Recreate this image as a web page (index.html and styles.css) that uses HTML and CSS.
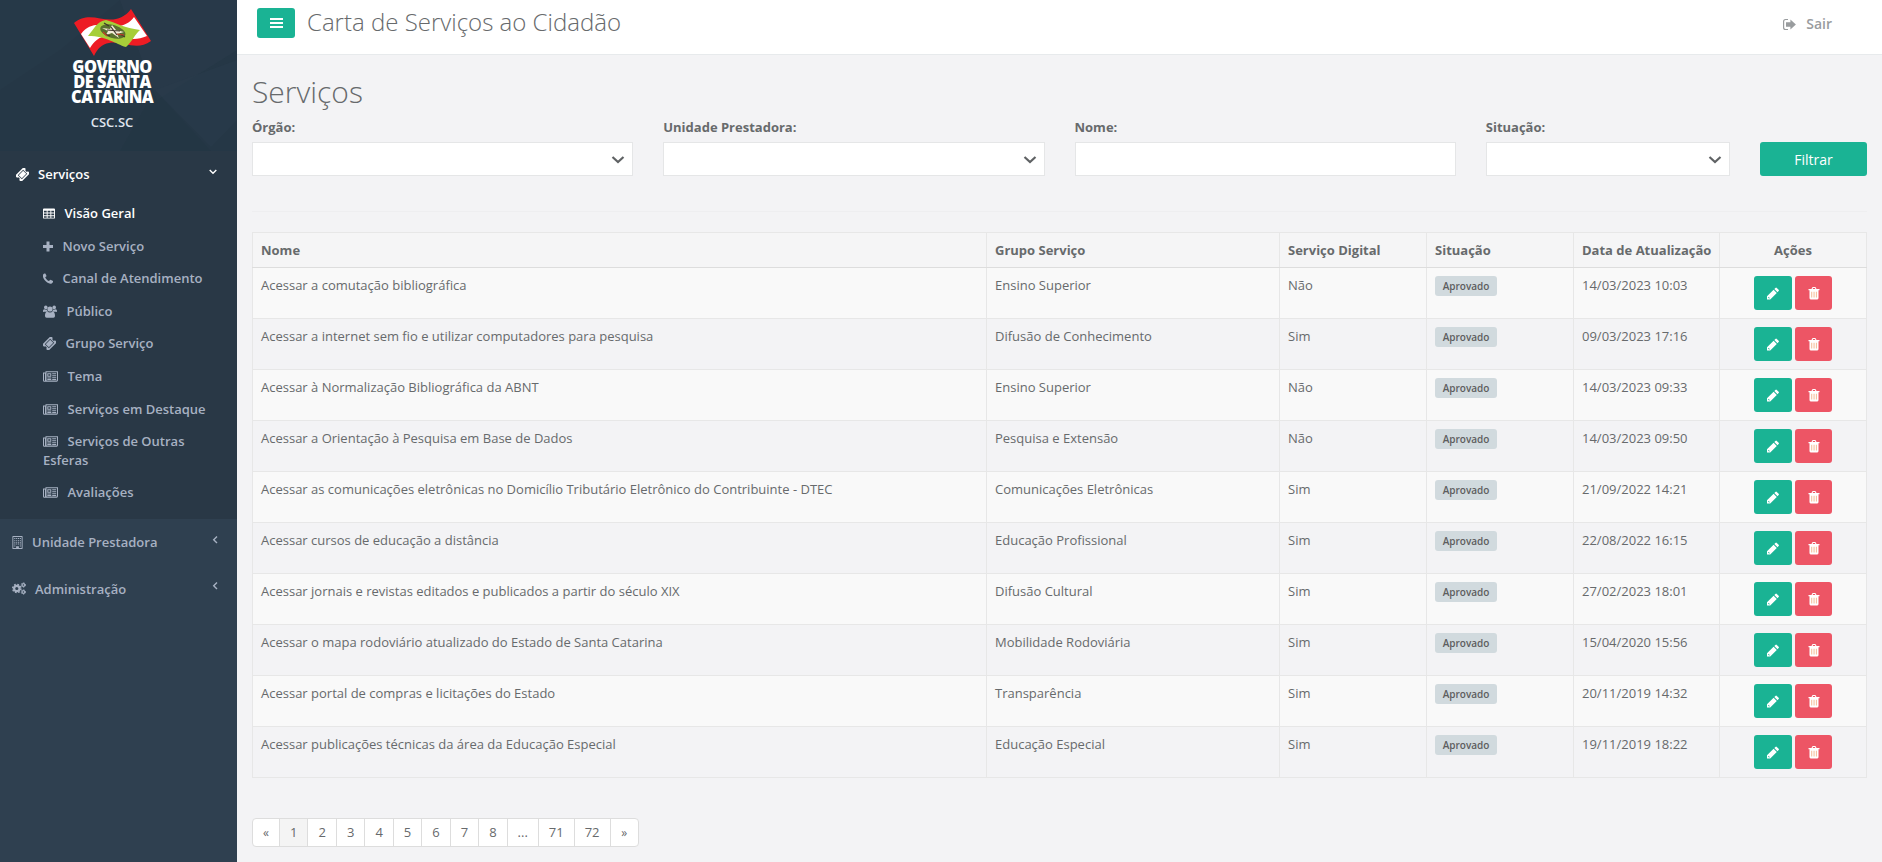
FILE: index.html
```html
<!DOCTYPE html>
<html lang="pt-BR">
<head>
<meta charset="utf-8">
<title>Carta de Serviços ao Cidadão</title>
<link rel="stylesheet" href="styles.css">
</head>
<body>
<svg class="defs" width="0" height="0">
  <symbol id="ticket" viewBox="0 0 14 14"><g transform="rotate(-45 7 7)"><path fill-rule="evenodd" d="M.3 2.300h13.400v3.100a1.600 1.600 0 0 0 0 3.200v3.100H.3V8.600a1.600 1.600 0 0 0 0-3.200zM2.900 3.900v6.200h8.200V3.900zM3.600 4.600h6.800v4.800H3.600z"/></g></symbol>
  <symbol id="table" viewBox="0 0 13 12"><path fill-rule="evenodd" d="M1 .5h11q1 0 1 1v9q0 1-1 1H1q-1 0-1-1v-9q0-1 1-1zM1 3v2h3V3zm4 0v2h3V3zm4 0v2h3V3zM1 6v2h3V6zm4 0v2h3V6zm4 0v2h3V6zM1 9v1.600h3V9zm4 0v1.600h3V9zm4 0v1.600h3V9z"/></symbol>
  <symbol id="plus" viewBox="0 0 10 12"><path d="M3.500 1h3v3.500H10v3H6.500V11h-3V7.500H0v-3h3.500z"/></symbol>
  <symbol id="phone" viewBox="0 0 10 11"><path d="M0 2C.2.800 1.400.5 2.300.500c.5.7 1 1.700 1.200 2.400-.1.600-1.300 1-1.200 1.500.6 1.500 2 2.900 3.500 3.500.6.100.9-1.100 1.500-1.200.8.200 1.800.7 2.700 1.200.3 1-.3 2-1.300 2.500-1.300.600-3 .2-4.500-.900C2.200 8 .6 6 0 4z"/></symbol>
  <symbol id="users" viewBox="0 0 14 13"><circle cx="2.800" cy="2.400" r="1.800"/><circle cx="11.200" cy="2.400" r="1.800"/><circle cx="7" cy="4" r="2.600"/><path d="M0 6.500C0 5 .5 4.200 1.300 4.200q1.500.800 2.600.3Q4 6 5 6.800H1.300Q0 7.200 0 6.500zM14 6.500c0-1.500-.5-2.300-1.300-2.300q-1.500.8-2.600.3Q10 6 9 6.800h3.700q1.300.400 1.300-.3zM2 11c0-2.700.8-4.200 2.300-4.200q2.700 1.600 5.400 0C11.200 6.800 12 8.300 12 11q0 1.700-1.600 1.700H3.600Q2 12.700 2 11z"/></symbol>
  <symbol id="news" viewBox="0 0 15 11"><path fill-rule="evenodd" d="M2.500.3H15v9q0 1.400-1.400 1.400H1.300Q0 10.700 0 9.400V1.600h2.500zM1 2.600v6.800q.1.400.5.400t.5-.4V2.600zM3.500 1.300v8.300h10q.5 0 .5-.5V1.300z"/><path fill-rule="evenodd" d="M4.300 2.200h4v3.600h-4zM5.300 3.200v1.600h2V3.200zM9.200 2.200h4v1h-4zM9.200 4.200h4v1h-4zM9.200 6.200h4v1h-4zM4.300 6.500h4v.9h-4zM4.300 8.100h4V9h-4zM9.200 8.100h4V9h-4z"/></symbol>
  <symbol id="building" viewBox="0 0 11 14"><path fill-rule="evenodd" d="M.5 0h10q.5 0 .5.500v13q0 .5-.5.500H.5q-.5 0-.5-.5V.5Q0 0 .5 0zM1 1v12h3v-2h3v2h3V1z"/><path d="M2 2.200h1.200v1H2zm2 0h1.200v1H4zm2 0h1.200v1H6zm2 0h1.200v1H8zm-6 2h1.200v1H2zm2 0h1.200v1H4zm2 0h1.200v1H6zm2 0h1.200v1H8zm-6 2h1.200v1H2zm2 0h1.200v1H4zm2 0h1.200v1H6zm2 0h1.200v1H8zm-6 2h1.200v1H2zm2 0h1.200v1H4zm2 0h1.200v1H6zm2 0h1.200v1H8zm-6 2h1.200v1H2zm6 0h1.200v1H8z"/></symbol>
  <symbol id="cogs" viewBox="0 0 14 13"><circle cx="4.800" cy="6.500" r="2.700" fill="none" stroke="currentColor" stroke-width="2.200"/><circle cx="4.800" cy="6.500" r="4.100" fill="none" stroke="currentColor" stroke-width="1.500" stroke-dasharray="1.700 1.520"/><circle cx="11.400" cy="3" r="1.400" fill="none" stroke="currentColor" stroke-width="1.200"/><circle cx="11.400" cy="3" r="2.200" fill="none" stroke="currentColor" stroke-width=".9" stroke-dasharray="1.200 1.100"/><circle cx="11.400" cy="10" r="1.400" fill="none" stroke="currentColor" stroke-width="1.200"/><circle cx="11.400" cy="10" r="2.200" fill="none" stroke="currentColor" stroke-width=".9" stroke-dasharray="1.200 1.100"/></symbol>
  <symbol id="pencil" viewBox="0 0 12 12"><path fill-rule="evenodd" d="M0 12V8.800L6.600 2.200 9.800 5.400 3.200 12zM1.200 9.800v.6h.6v.6h.6l.4-.4L1.600 9.400zM7.300 1.500 8.400.4q.7-.7 1.400 0l1.800 1.800q.7.700 0 1.400l-1.100 1.100z"/></symbol>
  <symbol id="trash" viewBox="0 0 12 13"><path fill-rule="evenodd" d="M3.500 2 4.200.5Q4.400 0 5 0h2q.6 0 .8.500L8.500 2h3v1.200h-1v7.900q0 1.400-1.200 1.400H2.700q-1.200 0-1.200-1.400V3.200h-1V2zM4.700 2h2.600l-.4-.9H5.100z"/><path class="bars" d="M3.300 4.700h.9v5.800h-.9zM5.600 4.700h.9v5.800h-.9zM7.900 4.700h.9v5.800h-.9z"/></symbol>
  <symbol id="exit" viewBox="0 0 13 12"><path d="M5 1H2.500Q.6 1 .6 3v6q0 2 1.900 2H5" fill="none" stroke="currentColor" stroke-width="1.200"/><path d="M3 3.800h4.400V1L12.900 6 7.400 11V8.200H3z"/></symbol>
</svg>
<div class="app">
  <nav class="sidebar">
    <div class="profile">
      <svg class="texture" viewBox="0 0 237 151" preserveAspectRatio="none"><path d="M0 0h120L60 50 0 90z" fill="#2b3f4f" opacity=".2"/><path d="M120 0h117v50l-80 50z" fill="#2d4050" opacity=".35"/><path d="M155 90 211 147 237 120V60z" fill="#2a3b4b" opacity=".5"/><path d="M155 90 120 151h91z" fill="#203241" opacity=".25"/></svg>
      <svg class="flag" viewBox="0 0 78 48"><path d="M0 15C14 3 28 14 42 11 50 9 54 5 57 1L77 33C62 44 48 32 35 35c-7 1-12 6-15 13z" fill="#ed1c24"/><path d="M7 26C18 11 32 20 46 18c8-2 11-5 14-9l13 19C60 34 50 29 37 28 26 27 20 33 16 40z" fill="#fff"/><path d="M14 28C20 21 23 13 32 12c11 3 18 8 34 10-5 4-8 12-14 17-11-3-19-11-38-11z" fill="#a6ce39"/><ellipse cx="39" cy="23.500" rx="13" ry="6.500" fill="#59702f" transform="rotate(17 39 23)"/><path d="m28 20 8 1 2-4 4 5 8 2-7 2 2 4-7-5-6 2 2-4z" fill="#f3ecd8"/><path d="m30 15 5 3m-4 8 5 2m10-2 5 3m-14-10 6 8m-10-5 13 1" stroke="#40352b" stroke-width="1.200"/><path d="m29 24 4 4m10-2 7 1" stroke="#c73c29" stroke-width="1.200"/></svg>
      <div class="brand">GOVERNO<br>DE SANTA<br>CATARINA</div>
      <strong class="unit">CSC.SC</strong>
    </div>
    <div class="group open">
      <a class="item"><svg class="ic w13"><use href="#ticket"/></svg><span>Serviços</span><svg class="arrow" viewBox="0 0 8 12"><path d="m.7 4 3.300 3.300L7.300 4"/></svg></a>
      <ul>
        <li class="on"><svg class="ic w12"><use href="#table"/></svg><span>Visão Geral</span></li>
        <li><svg class="ic w10"><use href="#plus"/></svg><span>Novo Serviço</span></li>
        <li><svg class="ic w10"><use href="#phone"/></svg><span>Canal de Atendimento</span></li>
        <li><svg class="ic w14"><use href="#users"/></svg><span>Público</span></li>
        <li><svg class="ic w13"><use href="#ticket"/></svg><span>Grupo Serviço</span></li>
        <li><svg class="ic w15"><use href="#news"/></svg><span>Tema</span></li>
        <li><svg class="ic w15"><use href="#news"/></svg><span>Serviços em Destaque</span></li>
        <li><svg class="ic w15"><use href="#news"/></svg><span>Serviços de Outras Esferas</span></li>
        <li><svg class="ic w15"><use href="#news"/></svg><span>Avaliações</span></li>
      </ul>
    </div>
    <a class="item"><svg class="ic w11"><use href="#building"/></svg><span>Unidade Prestadora</span><svg class="arrow left" viewBox="0 0 8 12"><path d="M6 2.500 2.700 5.800 6 9.100"/></svg></a>
    <a class="item"><svg class="ic w14"><use href="#cogs"/></svg><span>Administração</span><svg class="arrow left" viewBox="0 0 8 12"><path d="M6 2.500 2.700 5.800 6 9.100"/></svg></a>
  </nav>
  <main>
    <header class="topbar">
      <button class="burger"><i></i><i></i><i></i></button>
      <span class="title">Carta de Serviços ao Cidadão</span>
      <a class="logout"><svg class="ic"><use href="#exit"/></svg><span>Sair</span></a>
    </header>
    <section class="content">
      <h1>Serviços</h1>
      <form class="filters">
        <label class="c3">Órgão:<span class="field"><svg viewBox="0 0 14 8"><path d="m1.500 1 5.500 5 5.500-5"/></svg></span></label>
        <label class="c3">Unidade Prestadora:<span class="field"><svg viewBox="0 0 14 8"><path d="m1.500 1 5.500 5 5.500-5"/></svg></span></label>
        <label class="c3">Nome:<span class="field"></span></label>
        <label class="c2">Situação:<span class="field"><svg viewBox="0 0 14 8"><path d="m1.500 1 5.500 5 5.500-5"/></svg></span></label>
        <button class="filter" type="button">Filtrar</button>
      </form>
      <hr>
      <table>
        <colgroup><col class="k-name"><col class="k-group"><col class="k-s"><col class="k-s"><col class="k-date"><col class="k-s"></colgroup>
        <thead><tr><th>Nome</th><th>Grupo Serviço</th><th>Serviço Digital</th><th>Situação</th><th>Data de Atualização</th><th class="mid">Ações</th></tr></thead>
        <tbody id="rows"></tbody>
      </table>
      <ul class="pages"><li class="sym">«</li><li class="cur">1</li><li>2</li><li>3</li><li>4</li><li>5</li><li>6</li><li>7</li><li>8</li><li>...</li><li>71</li><li>72</li><li class="sym">»</li></ul>
    </section>
  </main>
</div>
<script src="script.js"></script>
</body>
</html>
```
FILE: script.js
```js
const services = [
  ["Acessar a comutação bibliográfica", "Ensino Superior", "Não", "14/03/2023 10:03"],
  ["Acessar a internet sem fio e utilizar computadores para pesquisa", "Difusão de Conhecimento", "Sim", "09/03/2023 17:16"],
  ["Acessar à Normalização Bibliográfica da ABNT", "Ensino Superior", "Não", "14/03/2023 09:33"],
  ["Acessar a Orientação à Pesquisa em Base de Dados", "Pesquisa e Extensão", "Não", "14/03/2023 09:50"],
  ["Acessar as comunicações eletrônicas no Domicílio Tributário Eletrônico do Contribuinte - DTEC", "Comunicações Eletrônicas", "Sim", "21/09/2022 14:21"],
  ["Acessar cursos de educação a distância", "Educação Profissional", "Sim", "22/08/2022 16:15"],
  ["Acessar jornais e revistas editados e publicados a partir do século XIX", "Difusão Cultural", "Sim", "27/02/2023 18:01"],
  ["Acessar o mapa rodoviário atualizado do Estado de Santa Catarina", "Mobilidade Rodoviária", "Sim", "15/04/2020 15:56"],
  ["Acessar portal de compras e licitações do Estado", "Transparência", "Sim", "20/11/2019 14:32"],
  ["Acessar publicações técnicas da área da Educação Especial", "Educação Especial", "Sim", "19/11/2019 18:22"]
];
document.getElementById("rows").innerHTML = services.map(([name, group, digital, date]) =>
  `<tr><td>${name}</td><td>${group}</td><td>${digital}</td><td><span class="badge">Aprovado</span></td><td>${date}</td>` +
  `<td><div class="actions"><button class="edit"><svg><use href="#pencil"/></svg></button><button class="del"><svg><use href="#trash"/></svg></button></div></td></tr>`
).join("");
```
FILE: styles.css
```css
* { box-sizing: border-box; }
body { margin: 0; font: 13px/18.57px "Open Sans", sans-serif; color: #676a6c; background: #f3f3f5; overflow: hidden; }
ul { list-style: none; margin: 0; padding: 0; }
button { font-family: inherit; border: 0; padding: 0; color: #fff; border-radius: 3px; }
.defs { position: absolute; }
.app { display: flex; height: 862px; }
.sidebar { width: 237px; flex: none; background: #2f4050; color: #a7b1c2; font-weight: 600; }
.profile { position: relative; height: 151px; background: #253746; display: flex; flex-direction: column; align-items: center; padding: 8px 13px 0 0; overflow: hidden; }
.texture { position: absolute; left: 0; top: 0; width: 237px; height: 151px; }
.flag { position: relative; width: 78px; height: 48px; margin-left: 2px; flex: none; }
.brand { position: relative; text-align: center; color: #fff; font: 800 18px/15.200px "Open Sans", sans-serif; letter-spacing: -.6px; white-space: nowrap; margin-top: 3px; transform: scaleX(.91); }
.unit { position: relative; color: #dfe4ed; margin-top: 8px; font-weight: 600; }
.open { background: #293846; padding-bottom: 10.200px; }
.open ul { margin-top: -.4px; }
.item { display: flex; align-items: center; height: 46.57px; padding: 0 20px 0 12px; }
.open .item { color: #fff; padding-left: 16px; }
.ic { fill: currentColor; height: 13px; flex: none; vertical-align: -2px; }
.w10 { width: 10px; } .w11 { width: 11px; } .w12 { width: 12px; } .w13 { width: 13px; } .w14 { width: 14px; } .w15 { width: 15px; }
.item .ic { margin-right: 9px; }
.arrow { width: 8px; height: 12px; margin: -5px 0 0 auto; fill: none; stroke: currentColor; stroke-width: 1.400; }
.arrow.left { margin-right: -2px; }
.open li { padding: 7px 10px 7px 43px; }
.open li .ic { margin-right: 9.500px; }
.open .on { color: #fff; }
main { flex: 1; min-width: 0; }
.topbar { height: 55px; background: #fff; border-bottom: 1px solid #e7eaec; display: flex; align-items: flex-start; padding: 8px 50px 0 20px; }
.burger { width: 38px; height: 30px; background: #1ab394; display: flex; flex-direction: column; align-items: center; justify-content: center; gap: 2px; }
.burger i { width: 13px; height: 2px; background: #fff; }
.title { font-size: 24px; font-weight: 300; line-height: 28px; margin-left: 12px; }
.logout { margin-left: auto; display: flex; align-items: center; color: #999c9e; font-size: 14px; font-weight: 600; line-height: 32px; }
.logout .ic { width: 13px; margin-right: 10px; }
.content { padding: 0 15px; }
h1 { margin: 20px 0 0; font-size: 30px; line-height: 33px; font-weight: 100; height: 43px; }
.filters { display: flex; margin: 0 -15px; height: 58px; }
.filters > label { padding: 0 15px; font-weight: 700; }
.c3 { width: 25%; } .c2 { width: 16.667%; }
.field { display: flex; align-items: center; justify-content: flex-end; height: 34px; margin-top: 5px; background: #fff; border: 1px solid #e5e6e7; padding-right: 7px; }
.field svg { width: 14px; height: 8px; margin-top: 2px; fill: none; stroke: #5f6264; stroke-width: 2.200; }
.filter { width: 107px; height: 34px; background: #1ab394; font-size: 14px; margin: 24px 15px 0; }
hr { border: 0; border-top: 1px solid #eeeef0; margin: 35px 0 20px; }
table { width: 1615px; border-collapse: collapse; table-layout: fixed; }
.k-name { width: 734px; } .k-group { width: 293px; } .k-s { width: 147px; } .k-date { width: 146px; }
th, td { border: 1px solid #e7e7e7; padding: 8px; text-align: left; vertical-align: top; }
th { height: 35px; padding-bottom: 7px; background: #f5f5f6; border-bottom-color: #ddd; white-space: nowrap; font-weight: 700; }
td { height: 51px; }
tbody tr:nth-child(odd) { background: #f9f9f9; }
th.mid { text-align: center; }
.badge { display: block; width: 62px; height: 20px; border-radius: 3px; background: #d1dade; color: #5e5e5e; font-size: 10px; line-height: 21px; font-weight: 600; text-align: center; }
.actions { display: flex; justify-content: center; gap: 3px; }
.actions button { width: 38px; height: 34px; display: grid; place-items: center; }
.actions .del { width: 37px; background: #ed5565; }
.actions .edit { background: #1ab394; }
.actions svg { width: 12px; height: 13px; fill: #fff; }
.bars { fill: #f3b48a; }
.pages { display: flex; width: 387px; margin-top: 40px; height: 29px; background: #fff; border: 1px solid #ddd; border-radius: 4px; overflow: hidden; }
.pages li { flex: 1 1 28.500px; text-align: center; line-height: 27px; border-left: 1px solid #ddd; }
.pages li:nth-last-child(2), .pages li:nth-last-child(3) { flex-basis: 36px; }
.pages li:nth-last-child(4) { flex-basis: 31px; }
.pages li:first-child { border-left: 0; flex-basis: 26px; }
.pages .cur { background: #f4f4f4; }
.pages .sym { font-size: 12px; }
```
